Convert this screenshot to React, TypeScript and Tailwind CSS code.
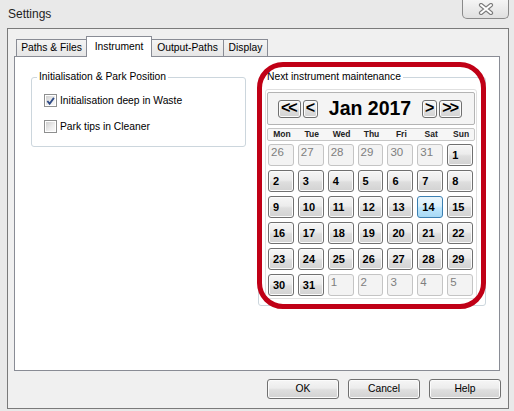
import React from "react";

type Day = { n: number; muted?: boolean; selected?: boolean };

const weekdays = ["Mon", "Tue", "Wed", "Thu", "Fri", "Sat", "Sun"];

const days: Day[] = [
  ...[26, 27, 28, 29, 30, 31].map((n) => ({ n, muted: true })),
  ...Array.from({ length: 31 }, (_, i) => ({ n: i + 1, selected: i + 1 === 14 })),
  ...[1, 2, 3, 4, 5].map((n) => ({ n, muted: true })),
];

const btn =
  "border border-[#707070] rounded-[3px] bg-[linear-gradient(to_bottom,#f6f6f6_0%,#ececec_45%,#dedede_55%,#d2d2d2_100%)] shadow-[inset_0_0_0_1px_#fbfbfb]";

const Checkbox = ({ checked }: { checked?: boolean }) => (
  <div className="w-[13px] h-[13px] border border-[#8e8f8f] bg-white p-px shrink-0">
    <div className="w-full h-full bg-[linear-gradient(135deg,#d0d0d0_0%,#eeeeee_60%,#f8f8f8_100%)] flex items-center justify-center">
      {checked && (
        <svg width="10" height="10" viewBox="0 0 10 10">
          <path d="M1.5 5 L4 8 L8.8 1.5" fill="none" stroke="#2e4a86" strokeWidth="2" />
        </svg>
      )}
    </div>
  </div>
);

const NavBtn = ({ label }: { label: string }) => (
  <div
    className={`${btn} h-[18px] px-[2px] flex items-center justify-center text-[16px] font-bold leading-none tracking-[-2px] text-black`}
  >
    <span className="-mt-[1px] pr-[2px]">{label}</span>
  </div>
);

export default function App() {
  return (
    <div className="relative w-[514px] h-[411px] bg-[#e9e9e9] overflow-hidden font-['Liberation_Sans',Arial,sans-serif] text-black select-none">
      {/* title bar */}
      <div className="h-[28px] flex items-start">
        <span className="pl-[8px] mt-[6px] text-[12px] leading-[16px] text-[#1e1e1e]">Settings</span>
        <div className="ml-auto mr-[5px] w-[47px] h-[19px] border border-t-0 border-[#8a8a8a] rounded-b-[5px] bg-[linear-gradient(to_bottom,#f5f5f5,#e0e0e0)] flex items-center justify-center">
          <svg width="16" height="12" viewBox="0 0 16 12">
            <path d="M3 2 L13 10 M13 2 L3 10" stroke="#7c7c7c" strokeWidth="4.2" strokeLinecap="round" />
            <path d="M3 2 L13 10 M13 2 L3 10" stroke="#ffffff" strokeWidth="2" strokeLinecap="round" />
          </svg>
        </div>
      </div>

      {/* dialog body */}
      <div className="ml-[7px] w-[502px] h-[381px] border border-[#7a7a7a] bg-[#f0f0f0] flex flex-col text-[10.3px] leading-[12px]">
        {/* tabs */}
        <div className="pt-[7px] pl-[8px]">
          <div className="relative z-10 flex items-end h-[21px]">
            <div className="w-[71px] h-[18px] border border-[#898c95] bg-[linear-gradient(to_bottom,#f4f4f4,#e6e6e6)] flex items-center justify-center">
              Paths &amp; Files
            </div>
            <div className="-ml-px w-[66px] h-[21px] border border-b-0 border-[#898c95] bg-white flex items-center justify-center pb-[1px]">
              Instrument
            </div>
            <div className="-ml-px w-[73px] h-[18px] border border-[#898c95] bg-[linear-gradient(to_bottom,#f4f4f4,#e6e6e6)] flex items-center justify-center">
              Output-Paths
            </div>
            <div className="-ml-px w-[45px] h-[18px] border border-[#898c95] bg-[linear-gradient(to_bottom,#f4f4f4,#e6e6e6)] flex items-center justify-center">
              Display
            </div>
          </div>
        </div>

        {/* tab panel */}
        <div className="-mt-px ml-[6px] w-[486px] h-[315px] border border-[#898c95] bg-white flex items-start pl-[16px] pt-[14px]">
          <fieldset className="w-[215px] border border-[#ccd6dd] rounded-[3px]">
            <legend className="ml-[5px] px-[2px] leading-[12px]">Initialisation &amp; Park Position</legend>
            <div className="pt-[11px] pb-[13px] pl-[12px] flex flex-col gap-[13px]">
              <label className="flex items-center gap-[3px] h-[13px]">
                <Checkbox checked />
                <span>Initialisation deep in Waste</span>
              </label>
              <label className="flex items-center gap-[3px] h-[13px]">
                <Checkbox />
                <span>Park tips in Cleaner</span>
              </label>
            </div>
          </fieldset>

          <fieldset className="ml-[12px] w-[228px] border border-[#ccd6dd] rounded-[3px]">
            <legend className="ml-[6px] px-[2px] leading-[12px]">Next instrument maintenance</legend>
            {/* calendar */}
            <div className="pt-[6px] pb-[6px] pl-[6px]">
              <div className="w-[212px] border border-[#e0e0e0] rounded-[3px] px-px pt-[2px] pb-[2px] flex flex-col gap-[3px]">
                <div className="h-[33px] border border-[#b4b4b4] rounded-[2px] bg-[#f4f4f4] flex items-center pl-[10px] pr-[12px]">
                  <div className="flex gap-[2px]">
                    <NavBtn label="<<" />
                    <NavBtn label="<" />
                  </div>
                  <div className="flex-1 text-center text-[19.5px] font-bold leading-none pt-[1px]">Jan 2017</div>
                  <div className="flex gap-[2px]">
                    <NavBtn label=">" />
                    <NavBtn label=">>" />
                  </div>
                </div>
                <div className="h-[13px] border border-[#c6c6c6] rounded-[2px] bg-[#f6f6f6] pl-px">
                  <div className="grid grid-cols-7 w-[205px] gap-x-[4px] h-full items-center">
                    {weekdays.map((d) => (
                      <span key={d} className="text-center text-[8.5px] font-bold leading-none text-[#222]">
                        {d}
                      </span>
                    ))}
                  </div>
                </div>
                <div className="pl-px">
                  <div className="grid grid-cols-7 w-[205px] gap-x-[4px] gap-y-[4px]">
                    {days.map((d, i) =>
                      d.muted ? (
                        <div
                          key={i}
                          className="h-[22px] border border-[#c4c4c4] rounded-[3px] bg-[#f3f3f3] pl-[2px] pt-[1px] text-[11.5px] leading-[12px] text-[#7e7e7e]"
                        >
                          {d.n}
                        </div>
                      ) : d.selected ? (
                        <div
                          key={i}
                          className="h-[22px] border border-[#3c7fb1] rounded-[3px] bg-[linear-gradient(to_bottom,#eaf6fd_0%,#d9f0fc_45%,#bee6fd_55%,#a7d9f5_100%)] flex items-center pl-[4px] pt-px text-[11px] font-bold leading-none"
                        >
                          {d.n}
                        </div>
                      ) : (
                        <div
                          key={i}
                          className={`${btn} h-[22px] flex items-center pl-[4px] pt-px text-[11px] font-bold leading-none`}
                        >
                          {d.n}
                        </div>
                      )
                    )}
                  </div>
                </div>
              </div>
            </div>
          </fieldset>
        </div>

        {/* dialog buttons */}
        <div className="mt-[8px] flex justify-end gap-[9px] pr-[7px]">
          {["OK", "Cancel", "Help"].map((b) => (
            <div key={b} className={`${btn} w-[72px] h-[20px] flex items-center justify-center`}>
              {b}
            </div>
          ))}
        </div>
      </div>

      {/* red annotation */}
      <div className="absolute left-[257px] top-[62px] w-[229px] h-[247px] border-[5px] border-[#c00016] rounded-[26px] pointer-events-none" />
    </div>
  );
}
